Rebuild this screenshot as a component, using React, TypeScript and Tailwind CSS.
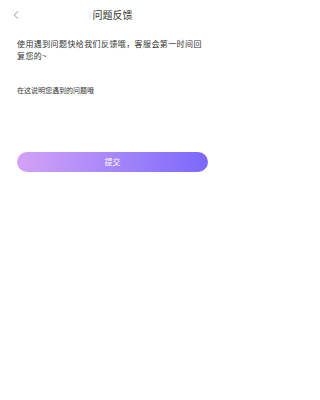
import { ChevronLeft } from 'lucide-react'

const FONT = { fontFamily: '"Noto Sans CJK SC", "Noto Sans", sans-serif' }

export default function App() {
  return (
    <div className="flex h-[400px] w-[225px] flex-col bg-white text-[#333]" style={FONT}>
      <div className="relative flex h-[29px] items-center justify-center">
        <ChevronLeft className="absolute left-[9px] top-[8px] h-[14px] w-[14px] text-[#777]" strokeWidth={1.3} />
        <span className="text-[10px] leading-none">问题反馈</span>
      </div>

      <div className="px-[17px] pt-[9px]">
        <p className="text-[8px] leading-[12px] tracking-[0.4px]">
          使用遇到问题快给我们反馈哦，客服会第一时间回复您的~
        </p>
        <p className="mt-[22px] text-[7px] leading-[12px]">在这说明您遇到的问题哦</p>
      </div>

      <div className="px-[17px] pt-[56px]">
        <button className="flex h-[20px] w-full items-center justify-center rounded-full bg-gradient-to-r from-[#d4a2f6] to-[#7c67fa] text-[8px] text-white">
          提交
        </button>
      </div>
    </div>
  )
}
